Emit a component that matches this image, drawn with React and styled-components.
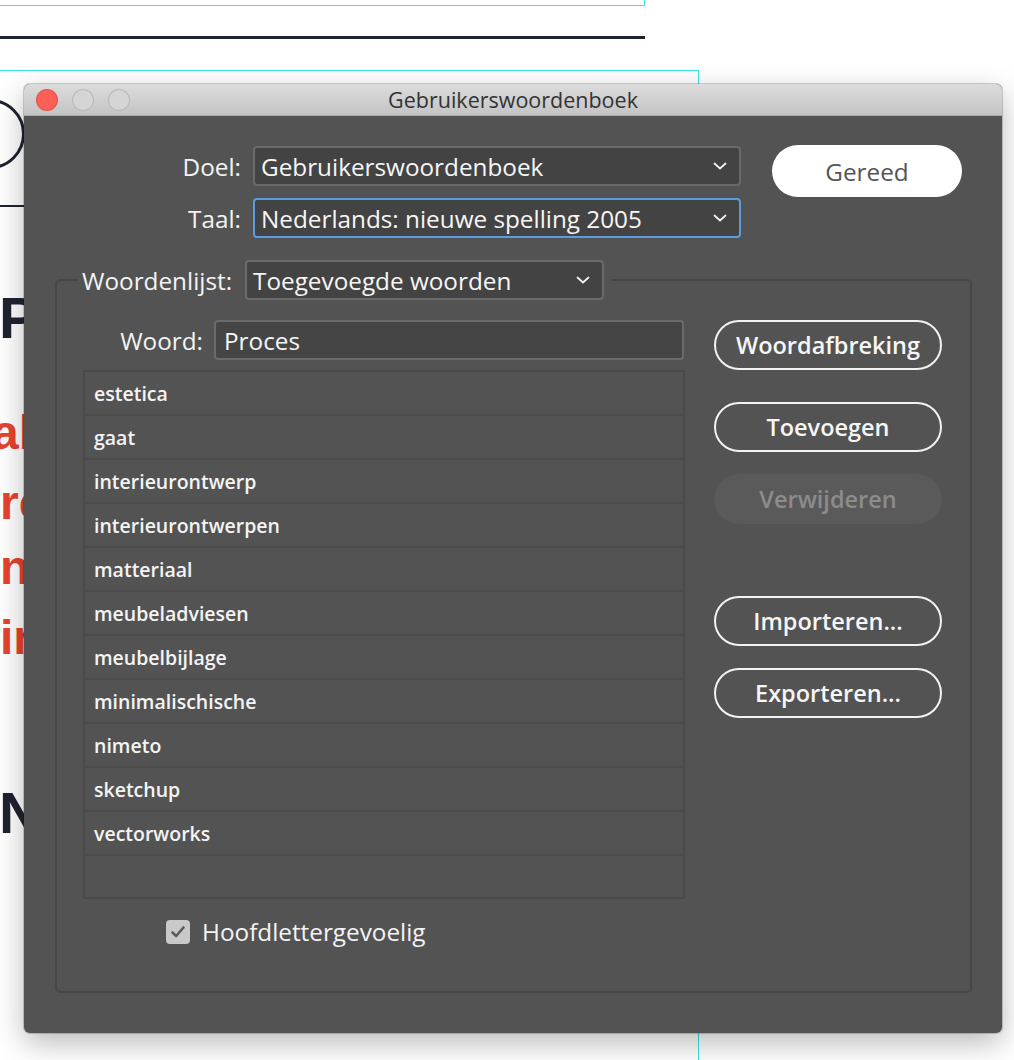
import React from 'react';
import styled, { createGlobalStyle } from 'styled-components';

const GlobalStyle = createGlobalStyle`
  html, body {
    margin: 0;
    padding: 0;
    background: #ffffff;
    overflow: hidden;
  }
  * { box-sizing: border-box; }
`;

const words = [
  'estetica',
  'gaat',
  'interieurontwerp',
  'interieurontwerpen',
  'matteriaal',
  'meubeladviesen',
  'meubelbijlage',
  'minimalischische',
  'nimeto',
  'sketchup',
  'vectorworks',
];

const Chevron = () => (
  <svg width="14" height="8" viewBox="0 0 14 8">
    <path d="M1.5 1.5 L7 6.5 L12.5 1.5" fill="none" stroke="#f2f2f2" strokeWidth="1.8" strokeLinecap="round" strokeLinejoin="round" />
  </svg>
);

const Check = () => (
  <svg width="16" height="14" viewBox="0 0 16 14">
    <path d="M2.5 7.5 L6.2 11 L13.5 2.5" fill="none" stroke="#5c5c5c" strokeWidth="2.6" strokeLinecap="round" strokeLinejoin="round" />
  </svg>
);

const App = () => {
  return (
    <Canvas>
      <GlobalStyle />
      <Document>
        <GuideTop />
        <Rule />
        <GuideFrame />
        <Stadium />
        <ThinRule />
        <Heading top={283}>P</Heading>
        <RedLine top={404} left={-8}>al</RedLine>
        <RedLine top={474} left={0}>rc</RedLine>
        <RedLine top={539} left={0}>ni</RedLine>
        <RedLine top={609} left={0}>ir</RedLine>
        <Heading top={778}>N</Heading>
      </Document>

      <Window>
        <TitleBar>
          <Lights>
            <Light color="#fe5f57" />
            <Light color="#d5d5d5" />
            <Light color="#d5d5d5" />
          </Lights>
          <Title>Gebruikerswoordenboek</Title>
        </TitleBar>

        <Body>
          <TopRow>
            <FormGrid>
              <Label>Doel:</Label>
              <Select>
                <span>Gebruikerswoordenboek</span>
                <Chevron />
              </Select>
              <Label>Taal:</Label>
              <Select focused>
                <span>Nederlands: nieuwe spelling 2005</span>
                <Chevron />
              </Select>
            </FormGrid>
            <DoneButton>Gereed</DoneButton>
          </TopRow>

          <Group>
            <Legend>
              <Label>Woordenlijst:</Label>
              <Select width={359}>
                <span>Toegevoegde woorden</span>
                <Chevron />
              </Select>
            </Legend>

            <GroupContent>
              <LeftCol>
                <WordRow>
                  <Label>Woord:</Label>
                  <TextField>Proces</TextField>
                </WordRow>
                <WordList>
                  {words.map((w) => (
                    <WordItem key={w}>{w}</WordItem>
                  ))}
                </WordList>
                <CheckRow>
                  <CheckBox>
                    <Check />
                  </CheckBox>
                  <Label>Hoofdlettergevoelig</Label>
                </CheckRow>
              </LeftCol>

              <ButtonCol>
                <PillButton>Woordafbreking</PillButton>
                <PillButton space={32}>Toevoegen</PillButton>
                <PillButton space={22} disabled>Verwijderen</PillButton>
                <PillButton space={72}>Importeren...</PillButton>
                <PillButton space={22}>Exporteren...</PillButton>
              </ButtonCol>
            </GroupContent>
          </Group>
        </Body>
      </Window>
    </Canvas>
  );
};

const Canvas = styled.div`
  position: relative;
  width: 1014px;
  height: 1060px;
  overflow: hidden;
  background: #ffffff;
`;

const Document = styled.div`
  position: absolute;
  inset: 0;
  font-family: "Liberation Sans", Arial, sans-serif;
  font-weight: 700;
`;

const GuideTop = styled.div`
  position: absolute;
  left: -2px;
  top: -10px;
  width: 647px;
  height: 16px;
  border-right: 1px solid #3fe2e6;
  border-bottom: 1px solid #3fe2e6;
`;

const Rule = styled.div`
  position: absolute;
  left: 0;
  top: 36px;
  width: 645px;
  height: 3px;
  background: #1e2430;
`;

const GuideFrame = styled.div`
  position: absolute;
  left: -2px;
  top: 70px;
  width: 701px;
  height: 1000px;
  border-top: 1px solid #3fe2e6;
  border-right: 1px solid #3fe2e6;
`;

const Stadium = styled.div`
  position: absolute;
  left: -70px;
  top: 99px;
  width: 95px;
  height: 70px;
  border: 3px solid #1e2430;
  border-radius: 35px;
`;

const ThinRule = styled.div`
  position: absolute;
  left: 0;
  top: 205px;
  width: 40px;
  height: 2px;
  background: #1e2430;
`;

const Heading = styled.div`
  position: absolute;
  left: -1px;
  top: ${(p) => p.top}px;
  font-size: 58px;
  line-height: 1.2;
  color: #1e2430;
`;

const RedLine = styled.div`
  position: absolute;
  left: ${(p) => p.left}px;
  top: ${(p) => p.top}px;
  font-size: 48px;
  line-height: 1.2;
  color: #e8432e;
`;

const Window = styled.div`
  position: absolute;
  left: 24px;
  top: 84px;
  width: 978px;
  height: 949px;
  background: #535353;
  border-radius: 6px;
  overflow: hidden;
  box-shadow: 0 0 0 1px rgba(0, 0, 0, 0.18), 0 10px 30px rgba(0, 0, 0, 0.28);
  font-family: "Open Sans", "Noto Sans", sans-serif;
  color: #f4f4f4;
  display: flex;
  flex-direction: column;
`;

const TitleBar = styled.div`
  position: relative;
  height: 32px;
  flex: none;
  display: flex;
  align-items: center;
  justify-content: center;
  background: linear-gradient(#dcdcdc, #c4c4c4);
  border-bottom: 1px solid #a9a9a9;
`;

const Lights = styled.div`
  position: absolute;
  left: 12px;
  top: 5px;
  display: flex;
  gap: 14px;
`;

const Light = styled.div`
  width: 22px;
  height: 22px;
  border-radius: 50%;
  background: ${(p) => p.color};
  border: 1px solid rgba(0, 0, 0, 0.12);
`;

const Title = styled.div`
  font-family: "Open Sans", sans-serif;
  font-size: 21.5px;
  color: #333333;
`;

const Body = styled.div`
  flex: 1;
  padding: 30px 30px 40px 31px;
  display: flex;
  flex-direction: column;
`;

const TopRow = styled.div`
  display: flex;
  align-items: flex-start;
`;

const FormGrid = styled.div`
  display: grid;
  grid-template-columns: 186px 488px;
  column-gap: 12px;
  row-gap: 12px;
  align-items: center;
`;

const Label = styled.div`
  font-size: 24.3px;
  color: #f4f4f4;
  text-align: right;
  white-space: nowrap;
`;

const Select = styled.div`
  width: ${(p) => (p.width ? `${p.width}px` : 'auto')};
  height: 40px;
  display: flex;
  align-items: center;
  justify-content: space-between;
  padding: 0 12px 0 6px;
  background: #434343;
  border: 2px solid ${(p) => (p.focused ? '#5b9be0' : '#6a6a6a')};
  border-radius: 4px;
  font-size: 24.3px;
  color: #f6f6f6;
  white-space: nowrap;
`;

const DoneButton = styled.div`
  margin-left: 31px;
  margin-top: -1px;
  width: 190px;
  height: 52px;
  border-radius: 26px;
  background: #ffffff;
  color: #555555;
  font-size: 24.3px;
  display: flex;
  align-items: center;
  justify-content: center;
`;

const Group = styled.fieldset`
  margin: 22px 0 0 0;
  padding: 20px 28px 0 26px;
  flex: 1;
  border: 2px solid #474747;
  border-radius: 5px;
  min-width: 0;
`;

const Legend = styled.legend`
  display: flex;
  align-items: center;
  gap: 13px;
  margin-left: -5px;
  padding: 0 7px 0 4px;
`;

const GroupContent = styled.div`
  display: flex;
  gap: 29px;
`;

const LeftCol = styled.div`
  width: 602px;
  display: flex;
  flex-direction: column;
`;

const WordRow = styled.div`
  display: grid;
  grid-template-columns: 120px 1fr;
  column-gap: 11px;
  align-items: center;
  margin-right: 1px;
`;

const TextField = styled.div`
  height: 40px;
  display: flex;
  align-items: center;
  padding: 0 8px;
  background: #454545;
  border: 2px solid #6a6a6a;
  border-radius: 4px;
  font-size: 24.3px;
  color: #f6f6f6;
`;

const WordList = styled.div`
  margin-top: 10px;
  height: 529px;
  border: 2px solid #4a4a4a;
  display: flex;
  flex-direction: column;
`;

const WordItem = styled.div`
  height: 44px;
  flex: none;
  display: flex;
  align-items: center;
  padding-left: 9px;
  border-bottom: 2px solid #4b4b4b;
  font-size: 19.5px;
  font-weight: 600;
  color: #f4f4f4;
`;

const CheckRow = styled.div`
  display: flex;
  align-items: center;
  gap: 12px;
  margin: 16px 0 0 83px;
`;

const CheckBox = styled.div`
  width: 24px;
  height: 24px;
  border-radius: 4px;
  background: #c9c9c9;
  display: flex;
  align-items: center;
  justify-content: center;
`;

const ButtonCol = styled.div`
  width: 228px;
  display: flex;
  flex-direction: column;
`;

const PillButton = styled.div`
  margin-top: ${(p) => p.space || 0}px;
  height: 50px;
  border-radius: 25px;
  border: 2px solid ${(p) => (p.disabled ? 'transparent' : '#f2f2f2')};
  background: ${(p) => (p.disabled ? '#5a5a5a' : 'transparent')};
  color: ${(p) => (p.disabled ? '#8c8c8c' : '#f6f6f6')};
  font-size: 23.5px;
  font-weight: 600;
  display: flex;
  align-items: center;
  justify-content: center;
`;

export default App;
